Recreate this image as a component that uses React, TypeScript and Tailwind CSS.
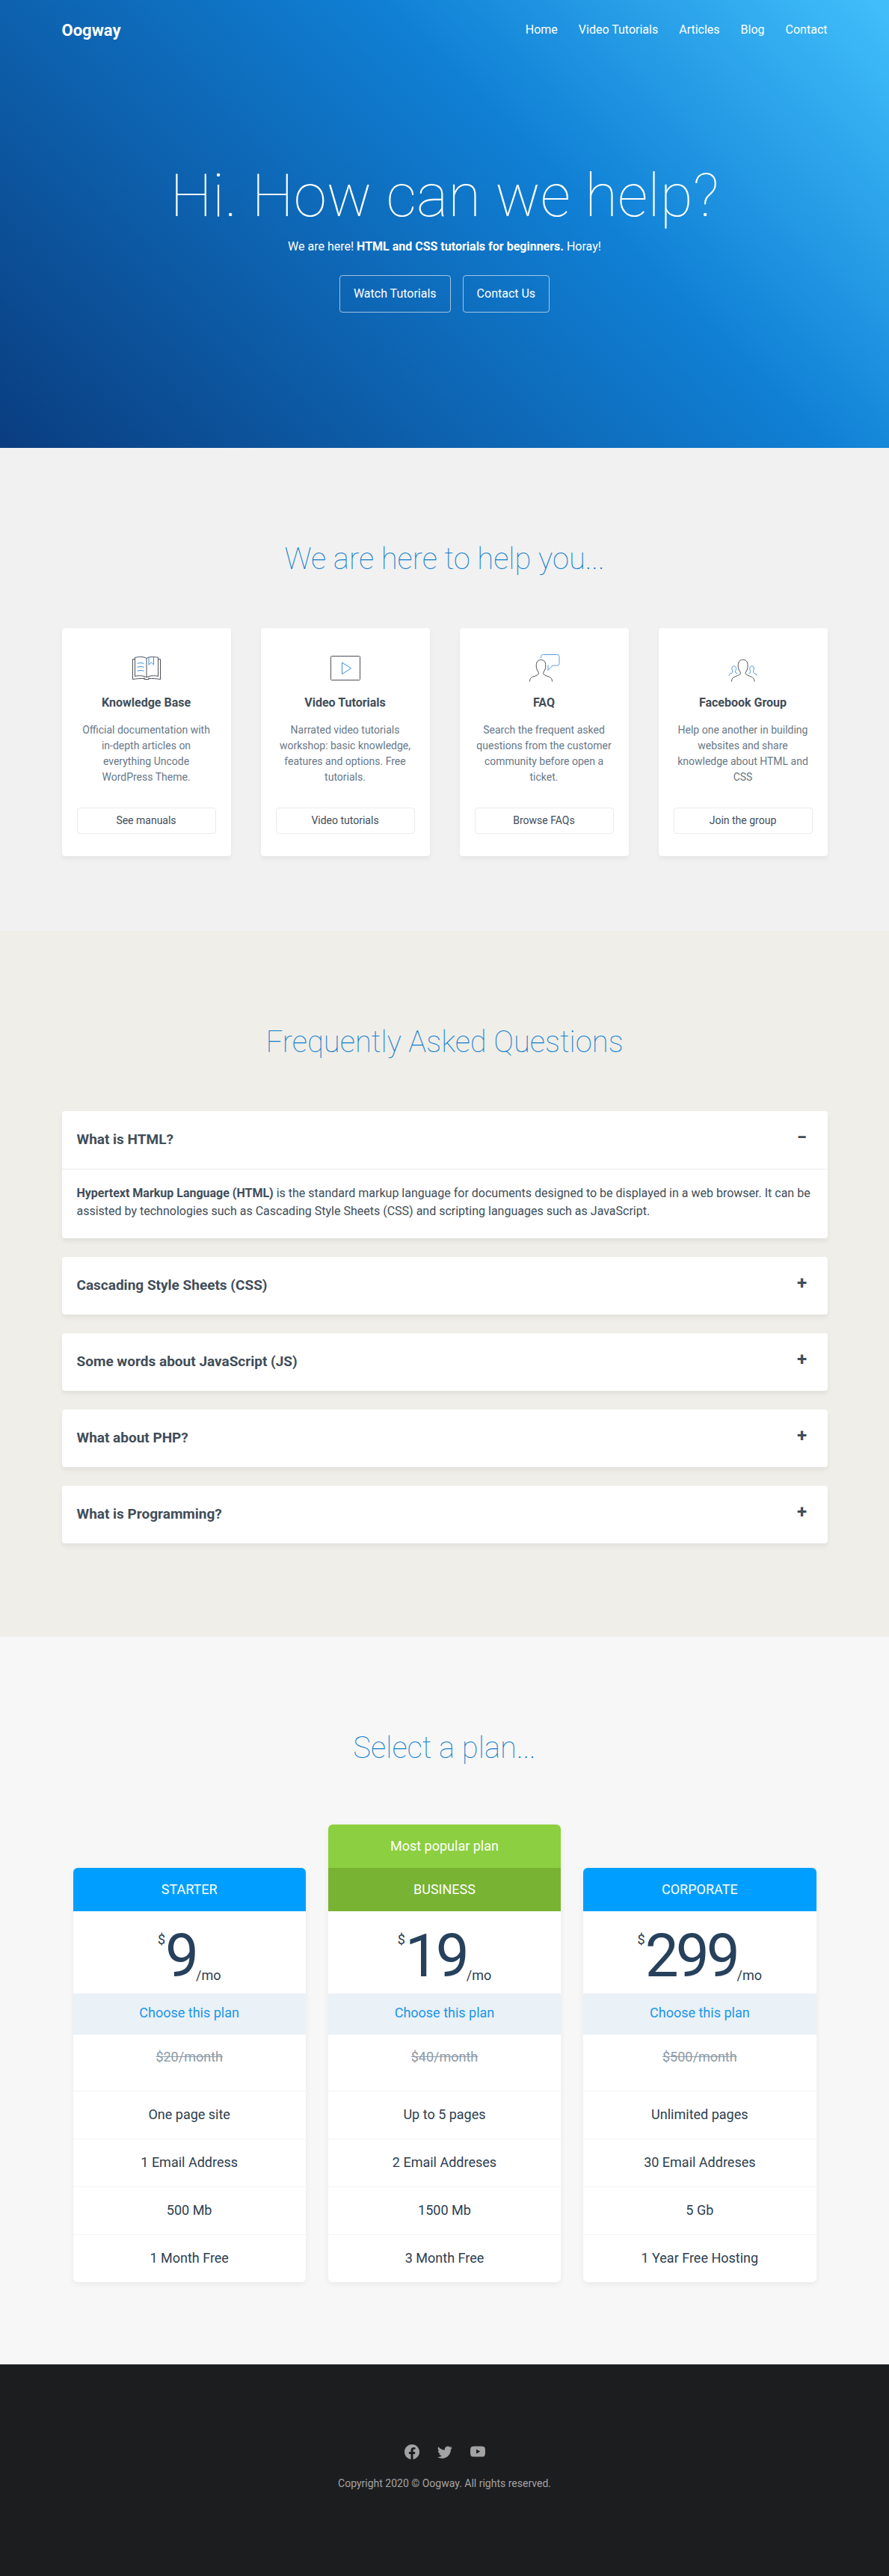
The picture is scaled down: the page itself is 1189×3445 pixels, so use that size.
import { useState, type ReactNode } from "react";
import { BsFacebook, BsTwitter, BsYoutube } from "react-icons/bs";

const navLinks = ["Home", "Video Tutorials", "Articles", "Blog", "Contact"];

function LineIcon({ children }: { children: ReactNode }) {
  return (
    <svg
      viewBox="0 0 48 48"
      className="mx-auto size-12 fill-none stroke-[#4b5058]"
      strokeWidth="1"
      strokeLinejoin="round"
      aria-hidden="true"
    >
      {children}
    </svg>
  );
}

function BookIcon() {
  return (
    <LineIcon>
      <path d="M8.5 11.5H5.5V38.5C11 37.5 17 37.300 21 37.600" />
      <path d="M39.5 11.5H42.5V38.5C37 37.5 31 37.300 27 37.600" />
      <path d="M24 10.5C21 8 13 8 8.500 9.500V34.500C13 33 21 33.500 24 36" />
      <path d="M24 10.5C27 8 35 8 39.500 9.500V34.500C35 33 27 33.500 24 36Z" />
      <path d="M21 36v2.500h6V36" />
      <g className="stroke-[#3f8fd6]">
        <path d="M11.500 17.300c3-1 6-1 9 0M11.500 22.300c3-1 6-1 9 0M11.500 27.300c3-1 6-1 9 0" />
        <path d="M27 8.800V19l3.300-3.200L33.500 19V8.300" />
      </g>
    </LineIcon>
  );
}

function PlayIcon() {
  return (
    <LineIcon>
      <rect x="4.500" y="7.500" width="39" height="32" rx="1" />
      <path className="stroke-[#3f8fd6]" d="M19.500 16v15.500L31.500 23.700Z" />
    </LineIcon>
  );
}

function ChatIcon() {
  return (
    <LineIcon>
      <path d="M4.500 41.500C4.500 35 9 35.500 13 33.500C16 32 17.500 31 15.500 28C13.500 25.500 13 22 13.300 18.500C13.700 14.500 16 12.500 19.500 12.500C23 12.500 25.400 14.500 25.700 18.500C26 22 25.500 25.500 23.500 28C21.500 31 23 32 26 33.500C30 35.500 34.500 35 34.500 41.500" />
      <path
        className="stroke-[#5b9bd8]"
        d="M19.500 10V8.500C19.500 6.500 20.500 5.500 22.500 5.500H40.500C43 5.500 44 6.500 44 8.500V16.500C44 19 43 20 40.500 20H35L29 26.500V19.500"
      />
    </LineIcon>
  );
}

function GroupIcon() {
  return (
    <LineIcon>
      <path d="M8.500 41.500C8.500 36 12 35.500 16.500 33.500C20 32 21.500 31 19.500 28C17.500 25.500 17 22 17.300 18.500C17.700 14.500 20 12.300 23.800 12.300C27.500 12.300 29.700 14.500 30 18.500C30.300 22 29.800 25.500 28 28C26 31 27.500 32 31 33.500C35.500 35.500 39 36 39 41.500" />
      <g className="stroke-[#3f8fd6]">
        <path d="M5 33.500C5 31.500 7 31 8.800 30C10.300 29 10 28 9.500 26.800C8.300 24 8.800 20.800 11.700 20.800C14.600 20.800 15 24 14 26.800C13.500 28 13.200 29 14.500 30L16 30.800" />
        <path d="M42.300 33.500C42.300 31.500 40.300 31 38.500 30C37 29 37.300 28 37.800 26.800C39 24 38.500 20.800 35.600 20.800C32.700 20.800 32.300 24 33.300 26.800C33.800 28 34.100 29 32.800 30L31.300 30.800" />
      </g>
    </LineIcon>
  );
}

const helpCards = [
  {
    icon: <BookIcon />,
    title: "Knowledge Base",
    text: "Official documentation with in-depth articles on everything Uncode WordPress Theme.",
    action: "See manuals",
  },
  {
    icon: <PlayIcon />,
    title: "Video Tutorials",
    text: "Narrated video tutorials workshop: basic knowledge, features and options. Free tutorials.",
    action: "Video tutorials",
  },
  {
    icon: <ChatIcon />,
    title: "FAQ",
    text: "Search the frequent asked questions from the customer community before open a ticket.",
    action: "Browse FAQs",
  },
  {
    icon: <GroupIcon />,
    title: "Facebook Group",
    text: "Help one another in building websites and share knowledge about HTML and CSS",
    action: "Join the group",
  },
];

const questions: { title: string; body: ReactNode }[] = [
  {
    title: "What is HTML?",
    body: (
      <>
        <strong>Hypertext Markup Language (HTML)</strong> is the standard markup language for
        documents designed to be displayed in a web browser. It can be assisted by technologies such
        as Cascading Style Sheets (CSS) and scripting languages such as JavaScript.
      </>
    ),
  },
  {
    title: "Cascading Style Sheets (CSS)",
    body: "CSS describes how the elements of an HTML document are presented.",
  },
  {
    title: "Some words about JavaScript (JS)",
    body: "JavaScript is the programming language that makes web pages interactive.",
  },
  { title: "What about PHP?", body: "PHP is a scripting language that runs on the server." },
  {
    title: "What is Programming?",
    body: "Programming is the writing of instructions that a computer can follow.",
  },
];

const plans = [
  {
    name: "STARTER",
    price: "9",
    old: "$20/month",
    features: ["One page site", "1 Email Address", "500 Mb", "1 Month Free"],
    popular: false,
  },
  {
    name: "BUSINESS",
    price: "19",
    old: "$40/month",
    features: ["Up to 5 pages", "2 Email Addreses", "1500 Mb", "3 Month Free"],
    popular: true,
  },
  {
    name: "CORPORATE",
    price: "299",
    old: "$500/month",
    features: ["Unlimited pages", "30 Email Addreses", "5 Gb", "1 Year Free Hosting"],
    popular: false,
  },
];

function SectionTitle({ children }: { children: ReactNode }) {
  return (
    <h2 className="text-center text-[40px] leading-[57px] font-thin text-[#0f7ccb]">{children}</h2>
  );
}

function Faq() {
  const [open, setOpen] = useState(0);
  return (
    <div className="mt-16 flex flex-col gap-[25px]">
      {questions.map((q, i) => (
        <div key={q.title} className="rounded-sm bg-white shadow-[0_4px_6px_rgba(0,0,0,0.06)]">
          <h3>
            <button
              type="button"
              aria-expanded={open === i}
              onClick={() => setOpen(open === i ? -1 : i)}
              className="flex h-[77px] w-full items-center justify-between px-5 text-left text-[19px] font-bold"
            >
              {q.title}
              <span className="w-7 pb-2 text-center text-2xl" aria-hidden="true">
                {open === i ? "−" : "+"}
              </span>
            </button>
          </h3>
          {open === i && (
            <p className="border-t border-[#ececec] px-5 pt-5 pb-6 text-base">{q.body}</p>
          )}
        </div>
      ))}
    </div>
  );
}

export default function App() {
  return (
    <div className="font-[Roboto,sans-serif] text-base text-[#414d58]">
      <div className="bg-[linear-gradient(45deg,#0a3d80_0%,#1080d5_62%,#42bffb_100%)] px-5 pb-[181px] text-white">
        <header className="mx-auto flex h-20 max-w-[1024px] items-center justify-between">
          <a href="#" className="text-[22px] font-bold">
            Oogway
          </a>
          <nav className="flex gap-7">
            {navLinks.map((l) => (
              <a key={l} href="#">
                {l}
              </a>
            ))}
          </nav>
        </header>
        <div className="pt-[135px] text-center">
          <h1 className="text-[80px] leading-[94px] font-thin">Hi. How can we help?</h1>
          <p className="mt-[9px]">
            We are here! <strong>HTML and CSS tutorials for beginners.</strong> Horay!
          </p>
          <div className="mt-[26px] flex justify-center gap-4">
            {["Watch Tutorials", "Contact Us"].map((l) => (
              <a key={l} href="#" className="rounded-sm border border-white/60 px-[18px] py-3">
                {l}
              </a>
            ))}
          </div>
        </div>
      </div>

      <section className="bg-[#f1f1f1] px-5 pt-[120px] pb-[100px]">
        <SectionTitle>We are here to help you...</SectionTitle>
        <div className="mx-auto mt-16 grid max-w-[1024px] grid-cols-4 gap-10">
          {helpCards.map((c) => (
            <article
              key={c.title}
              className="flex flex-col rounded-sm bg-white px-5 py-[30px] text-center shadow-[0_4px_6px_rgba(0,0,0,0.05)]"
            >
              {c.icon}
              <h3 className="mt-2.5 font-bold">{c.title}</h3>
              <p className="mt-3.5 mb-[30px] text-sm leading-[21px] text-[#687887]">{c.text}</p>
              <a
                href="#"
                className="mt-auto rounded-sm border border-[#ebebeb] py-1.5 text-sm leading-[21px]"
              >
                {c.action}
              </a>
            </article>
          ))}
        </div>
      </section>

      <section className="bg-[#efeee9] px-5 pt-[120px] pb-[125px]">
        <SectionTitle>Frequently Asked Questions</SectionTitle>
        <div className="mx-auto max-w-[1024px]">
          <Faq />
        </div>
      </section>

      <section className="bg-[#f7f7f7] px-5 pt-[120px] pb-[110px]">
        <SectionTitle>Select a plan...</SectionTitle>
        <div className="mx-auto mt-[74px] grid max-w-[994px] grid-cols-3 items-end gap-[30px] text-center text-lg text-[#2c3e50]">
          {plans.map((p) => (
            <article
              key={p.name}
              className="overflow-hidden rounded-md bg-white shadow-[0_3px_8px_rgba(0,0,0,0.06)]"
            >
              {p.popular && (
                <p className="bg-[#8ccf40] py-[15px] text-white">Most popular plan</p>
              )}
              <h3
                className={
                  p.popular ? "bg-[#78b333] py-[15px] text-white" : "bg-[#009fff] py-[15px] text-white"
                }
              >
                {p.name}
              </h3>
              <div className="flex h-[110px] justify-center pt-6 pb-2.5">
                <span className="leading-7">$</span>
                <span className="text-[80px] leading-[72px] tracking-tighter text-[#27415c]">
                  {p.price}
                </span>
                <span className="self-end leading-7">/mo</span>
              </div>
              <a href="#" className="block bg-[#eaf1f7] pt-3 pb-[15px] text-[#1b96e8]">
                Choose this plan
              </a>
              <ul className="divide-y divide-[#f3f4f5]">
                <li className="pt-4 pb-[31px] text-[#8d9ba8]">
                  <s>{p.old}</s>
                </li>
                {p.features.map((f) => (
                  <li key={f} className="pt-[17px] pb-[18px]">
                    {f}
                  </li>
                ))}
              </ul>
            </article>
          ))}
        </div>
      </section>

      <footer className="bg-[#1c1d1f] px-5 pt-[107px] pb-28 text-center text-sm leading-6 text-[#a3a3a4]">
        <div className="flex justify-center gap-6 text-xl">
          <a href="#" aria-label="Facebook">
            <BsFacebook />
          </a>
          <a href="#" aria-label="Twitter">
            <BsTwitter />
          </a>
          <a href="#" aria-label="YouTube">
            <BsYoutube />
          </a>
        </div>
        <p className="mt-5">Copyright 2020 © Oogway. All rights reserved.</p>
      </footer>
    </div>
  );
}
